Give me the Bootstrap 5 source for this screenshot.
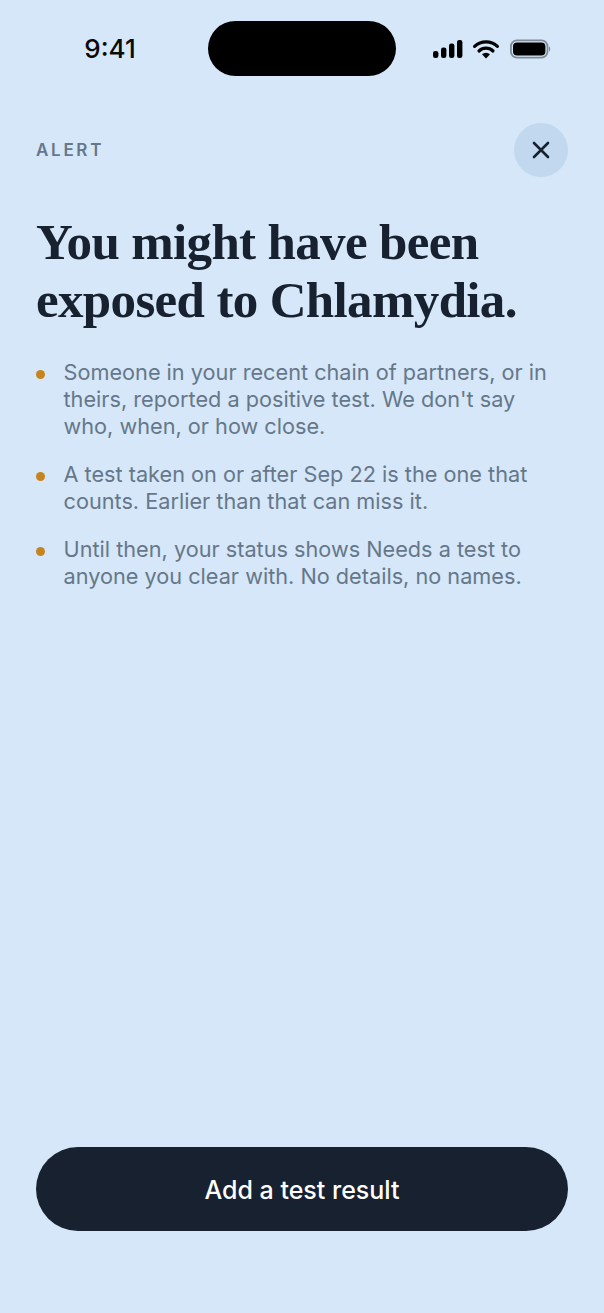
<!doctype html>
<html lang="en">
<head>
<meta charset="utf-8">
<title>Alert</title>
<link href="https://cdn.jsdelivr.net/npm/bootstrap@5.3.0/dist/css/bootstrap.min.css" rel="stylesheet">
<style>
html,body{height:100%}
body{background:#d5e7f8;font-family:Inter,"Liberation Sans",sans-serif;color:#17212f}
.screen{width:604px;height:1313px;padding:0 36px 82px}
.status{height:55px;margin-top:21px}
.clock{width:172px;font-size:26px;font-weight:500;line-height:55px;text-align:center;color:#0a0a0a;margin-left:-12px;margin-right:12px}
.island{width:188px;height:55px;background:#000;border-radius:28px}
.sysicons{width:172px;padding-right:17px}
.toprow{margin-top:47px;height:54px}
.eyebrow{font-size:17px;font-weight:600;letter-spacing:2.7px;color:#66778a;line-height:58px}
.closer{width:54px;height:54px;border-radius:50%;background:#c1d8ef;border:0}
.headline{font-family:"Liberation Serif",serif;font-weight:700;font-size:51px;line-height:57.5px;letter-spacing:-.65px;color:#17212f;margin:37px 0 0}
.points{margin:30px 0 0;padding:0;list-style:none;display:flex;flex-direction:column;gap:21px;font-size:21.7px;line-height:27px;color:#66778a}
.points li{display:flex;align-items:flex-start}
.dot{flex:none;width:9px;height:9px;border-radius:50%;background:#c6841f;margin:10.5px 18.5px 0 0}
.cta{height:84px;border-radius:42px;background:#17212f;color:#fff;font-size:25px;font-weight:500;border:0;padding-top:10px}
.cta:hover{background:#17212f;color:#fff}
</style>
</head>
<body>
<main class="screen d-flex flex-column">
  <div class="status d-flex justify-content-between align-items-center">
    <div class="clock">9:41</div>
    <div class="island"></div>
    <div class="sysicons d-flex align-items-center justify-content-end">
      <svg width="118" height="20" viewBox="0 0 118 20" aria-hidden="true">
        <rect x="0" y="12" width="5.4" height="7" rx="2.2" fill="#000"/>
        <rect x="8" y="8.5" width="5.4" height="10.5" rx="2.2" fill="#000"/>
        <rect x="16" y="4.5" width="5.4" height="14.5" rx="2.2" fill="#000"/>
        <rect x="24" y="1" width="5.4" height="18" rx="2.2" fill="#000"/>
        <path d="M41.6 7.4a16.6 16.6 0 0 1 22.8 0M46 12a10.2 10.2 0 0 1 14 0" fill="none" stroke="#000" stroke-width="3.2" stroke-linecap="round"/>
        <path d="M49 15.2a6 6 0 0 1 8 0L53 19.4z" fill="#000"/>
        <rect x="77.9" y="1.4" width="36.6" height="17.2" rx="6" fill="none" stroke="#7f8b97" stroke-width="1.8"/>
        <rect x="80" y="3.6" width="32.4" height="12.8" rx="4" fill="#000"/>
        <path d="M116 7.5c1.6.4 1.6 4.6 0 5z" fill="#7f8b97"/>
      </svg>
    </div>
  </div>
  <div class="toprow d-flex justify-content-between align-items-center">
    <div class="eyebrow">ALERT</div>
    <button class="closer d-flex align-items-center justify-content-center p-0" type="button" aria-label="Close">
      <svg width="20" height="20" viewBox="0 0 20 20" aria-hidden="true"><path d="M3 3l14 14M17 3L3 17" stroke="#17212f" stroke-width="2.6" stroke-linecap="round"/></svg>
    </button>
  </div>
  <h1 class="headline">You might have been exposed to Chlamydia.</h1>
  <ul class="points">
    <li><span class="dot"></span><span>Someone in your recent chain of partners, or in theirs, reported a positive test. We don't say who, when, or how close.</span></li>
    <li><span class="dot"></span><span>A test taken on or after Sep 22 is the one that counts. Earlier than that can miss it.</span></li>
    <li><span class="dot"></span><span>Until then, your status shows Needs a test to anyone you clear with. No details, no names.</span></li>
  </ul>
  <button class="btn cta w-100 mt-auto" type="button">Add a test result</button>
</main>
</body>
</html>
